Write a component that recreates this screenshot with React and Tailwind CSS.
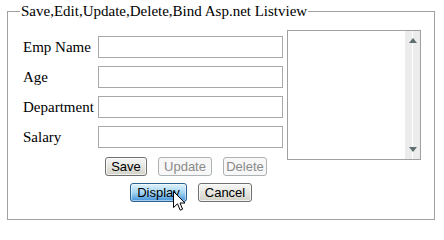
import React from 'react';

const fields = ['Emp Name', 'Age', 'Department', 'Salary'];

const Cursor = () => (
  <svg className="absolute left-[173px] top-[191px]" width="13" height="21" viewBox="0 0 13 21">
    <path
      d="M0.5 0.5 L0.5 16.5 L4.5 12.8 L7.2 19.2 L9.6 18.2 L7 12 L12 12 Z"
      fill="#fff"
      stroke="#000"
      strokeWidth="1"
      strokeLinejoin="miter"
    />
  </svg>
);

const WinButton = ({ label, width, disabled, active }) => {
  let cls =
    'h-[19px] rounded-[3px] border text-[13px] leading-none font-["Liberation_Sans",Arial,sans-serif] flex items-center justify-center ';
  if (disabled) {
    cls += 'border-[#adb2b5] bg-[#f7f7f7] text-[#8a8a8a]';
  } else if (active) {
    cls += 'border-[#2c628b] bg-linear-to-b from-[#e0f3fd] via-[#a4d5f2] to-[#3f92dc] text-black shadow-[inset_0_0_0_1px_rgba(255,255,255,0.5)]';
  } else {
    cls += 'border-[#707070] bg-linear-to-b from-[#f6f6f6] via-[#e6e6e0] to-[#d2d2c8] text-black shadow-[inset_0_0_0_1px_rgba(255,255,255,0.7)]';
  }
  return (
    <div className={cls} style={{ width }}>
      {label}
    </div>
  );
};

export default function App() {
  return (
    <div className="relative w-[444px] h-[227px] bg-white pt-[3px] pl-[7px] font-['Liberation_Serif','Times_New_Roman',serif] text-black">
      <fieldset className="w-[428px] h-[217px] border border-[#a0a0a0] pl-[12px] pr-0 pt-0 pb-0 m-0">
        <legend className="px-[1px] text-[15px] leading-[17px]">
          Save,Edit,Update,Delete,Bind Asp.net Listview
        </legend>

        <div className="flex">
          {/* left: form + buttons */}
          <div className="w-[263px]">
            <div className="mt-[16px] flex flex-col gap-[8px]">
              {fields.map((f) => (
                <div key={f} className="flex items-center h-[22px]">
                  <div className="w-[78px] pl-[3px] text-[15px] leading-none">{f}</div>
                  <div className="w-[185px] h-[22px] border border-[#a9a9a9] bg-white" />
                </div>
              ))}
            </div>

            <div className="mt-[9px] ml-[85px] flex gap-[11px]">
              <WinButton label="Save" width={42} />
              <WinButton label="Update" width={54} disabled />
              <WinButton label="Delete" width={44} disabled />
            </div>

            <div className="mt-[7px] ml-[110px] flex gap-[11px]">
              <WinButton label="Display" width={57} active />
              <WinButton label="Cancel" width={54} />
            </div>
          </div>

          {/* right: listbox */}
          <div className="ml-[4px] mt-[10px] w-[134px] h-[130px] border border-[#a0a0a0] bg-white flex justify-end">
            <div className="w-[15px] h-full bg-[#ececec] flex flex-col items-center justify-between py-[7px] relative">
              <div className="absolute top-0 bottom-0 left-[7px] w-[1px] bg-white" />
              <svg width="8" height="5" viewBox="0 0 8 5" className="relative">
                <path d="M4 0 L8 5 L0 5 Z" fill="#5f6f70" />
              </svg>
              <svg width="8" height="5" viewBox="0 0 8 5" className="relative">
                <path d="M0 0 L8 0 L4 5 Z" fill="#5f6f70" />
              </svg>
            </div>
          </div>
        </div>
      </fieldset>
      <Cursor />
    </div>
  );
}
